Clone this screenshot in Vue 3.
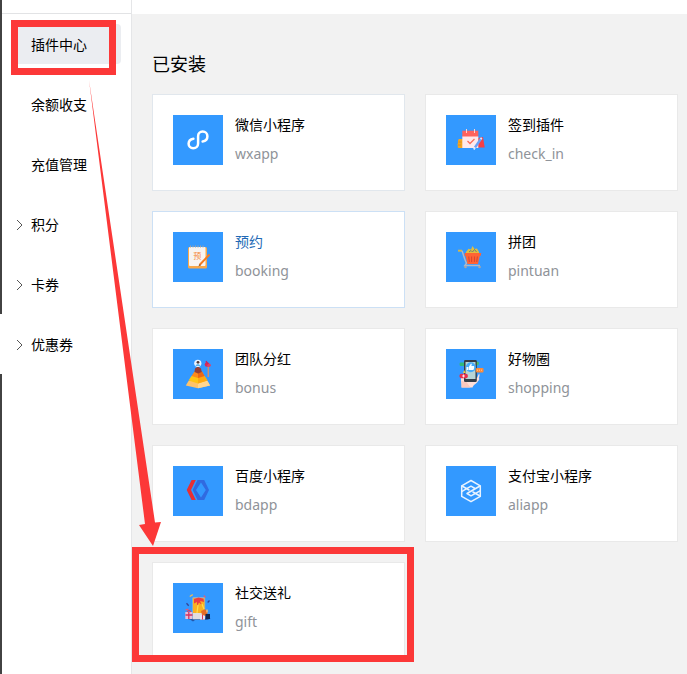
<script setup>
const menu = [
  { label: '插件中心', active: true },
  { label: '余额收支' },
  { label: '充值管理' },
  { label: '积分', group: true },
  { label: '卡券', group: true },
  { label: '优惠券', group: true },
]

const plugins = [
  { id: 'wxapp', name: '微信小程序', state: 'fading' },
  { id: 'check_in', name: '签到插件' },
  { id: 'booking', name: '预约', state: 'hovered' },
  { id: 'pintuan', name: '拼团' },
  { id: 'bonus', name: '团队分红' },
  { id: 'shopping', name: '好物圈' },
  { id: 'bdapp', name: '百度小程序' },
  { id: 'aliapp', name: '支付宝小程序' },
  { id: 'gift', name: '社交送礼' },
]
</script>

<template>
  <div class="page">
    <div class="rail"><span class="rail-current"></span></div>

    <aside class="sidebar">
      <div class="topline"></div>
      <nav class="menu">
        <a v-for="item in menu" :key="item.label" href="#" class="menu-item" :class="{ active: item.active }">
          <svg v-if="item.group" class="chevron" viewBox="0 0 8 12" aria-hidden="true">
            <path d="M1 1l5 5-5 5" />
          </svg>
          <span>{{ item.label }}</span>
        </a>
      </nav>
    </aside>

    <div class="content">
      <header class="topbar"></header>
      <main class="main">
        <h1 class="title">已安装</h1>
        <div class="grid">
          <a v-for="p in plugins" :key="p.id" href="#" class="card" :class="p.state">
            <svg class="icon" viewBox="0 0 50 50" aria-hidden="true">
              <rect width="50" height="50" fill="#39f" />

              <path
                v-if="p.id === 'wxapp'"
                d="M29.6 26.6C32.4 26.2 34.4 24 34.4 21.3C34.4 18.6 32.3 16.6 29.7 16.6C27 16.6 25.1 18.6 25.1 21.2V28.4C25.1 31 23.1 33.2 20.2 33.2C17.5 33.2 15.6 31.3 15.6 28.8C15.6 26.2 17.6 24.2 20.4 23.7"
                fill="none" stroke="#fff" stroke-width="2.5" stroke-linecap="round"
              />

              <g v-else-if="p.id === 'check_in'">
                <path d="M13 24h4v9h-4c-1.2 0-1.6-1-1-2-.7-1-.6-2 0-3-.3-2 .2-3.500 1-4z" fill="#f6a623" />
                <path d="M12.500 27h3M12 30h3" stroke="#c98a2c" stroke-width=".8" />
                <path d="M32 23l5-1 1.700 10.500H32z" fill="#f43f46" />
                <path d="M16.300 15.700h16V22h-16z" fill="#ff635e" />
                <path d="M16.300 21.500h16V33h-16z" fill="#ffe9ec" />
                <path d="M20.500 14v4M28.500 14v4" stroke="#ffd4d4" stroke-width="1" />
                <path d="M21.500 26l2.500 2.500 4.500-4.500" fill="none" stroke="#fb6c5a" stroke-width="1.300" />
                <path d="M35.300 23.300L29 32.500" stroke="#6aa0f7" stroke-width="2.400" />
                <path d="M35.700 22.700l-1 1.500M29 32.500l-1.200 2" stroke="#dbe9ff" stroke-width="1.800" />
              </g>

              <g v-else-if="p.id === 'booking'">
                <rect x="15" y="15" width="19" height="21.500" rx="1.500" fill="#f8a84a" />
                <rect x="16" y="15" width="16.500" height="19" rx="1" fill="#f7f4f2" />
                <path d="M17 14.500h15" stroke="#a9a39e" stroke-width="2" stroke-dasharray="1 1.500" />
                <text x="24.300" y="26.500" text-anchor="middle" class="icon-char">预</text>
                <path d="M36.500 22.500L26.500 33" stroke="#f47b20" stroke-width="1.900" />
                <path d="M26.800 32l-1.600 2.500 2.800-1.200z" fill="#8b5a35" />
              </g>

              <g v-else-if="p.id === 'pintuan'">
                <path d="M12 18.700h4" stroke="#d5b64a" stroke-width="2" />
                <path d="M16 18.700c1 2.500 2.500 9 4.500 12.500L18.800 33.500H34" fill="none" stroke="#aeb9ca" stroke-width="1.400" />
                <path d="M20 20l2.500-3.300 2.500.8 1.500-3.500 2 3 2.500-.4L33 20v2H20z" fill="#dfbe42" />
                <path d="M23 20l2-1.500 1.500 1.500 2-2.500 2 2.500" fill="none" stroke="#627e77" stroke-width=".9" />
                <path d="M18.700 21H35.300l-.7 3h-.8l-1.800 8H21.500l-2-8h-.8z" fill="#ff6334" />
                <path d="M22.700 24.500l.7 5.500M25.600 24.500v5.500M28.500 24.500v5.500M31.400 24.500l-.7 5.500" stroke="#d9472f" stroke-width="1.100" />
                <circle cx="19.500" cy="35" r="1.300" fill="#a9a6a7" />
                <circle cx="33.500" cy="35" r="1.300" fill="#a9a6a7" />
              </g>

              <g v-else-if="p.id === 'bonus'">
                <path d="M15.500 32h19L37 36.500 25 39.300 12.800 36.500z" fill="#ffc36b" />
                <path d="M25 32h9.500L37 36.500 25 39.300z" fill="#ffd690" />
                <path d="M18.500 27h13l3 4.500L25 34.500 15.500 31.500z" fill="#ffc414" />
                <path d="M25 27h6.500l3 4.500L25 34.500z" fill="#ffa80f" />
                <path d="M21.500 22.500h7.500l2.500 4.500L25 29l-6.500-2z" fill="#fd8b1b" />
                <path d="M25 22.500h4l2.500 4.500L25 29z" fill="#ec6814" />
                <path d="M22 19.500l3-2 3 2 .8 3.500-3.800 1.400L21.500 23z" fill="#963f34" />
                <circle cx="24.800" cy="14.300" r="3.600" fill="#eaf5ff" />
                <path d="M22.500 17c.2-2.500 4.600-2.500 4.800 0z" fill="#5ab1e5" />
                <circle cx="25" cy="13.300" r="1.400" fill="#513c3c" />
                <path d="M35.300 17.500V28" stroke="#c99170" stroke-width="1.500" />
                <circle cx="34" cy="15.500" r="2.300" fill="#d52b5a" />
                <circle cx="36" cy="16.300" r="1.800" fill="#e63f66" />
                <path d="M33 12.200l2 3" stroke="#c9265d" stroke-width="1.400" />
              </g>

              <g v-else-if="p.id === 'shopping'">
                <path d="M17 25l14 4 2-4.500c1 1 .5 3-.2 4.500 1 .5.200 2.500-.8 3-1 3-4 2.500-5.500 6.500L15.500 38.500C16 34 14 31 15.500 27z" fill="#ffdfd9" />
                <path d="M15.500 31.500c2 1 4 2 5 1.500l4 5.500h-9z" fill="#fbc8be" />
                <rect x="13.600" y="13.500" width="5.500" height="3.500" rx="1.200" fill="#2eb97c" />
                <path d="M29 13.500c2-2 4-.5 4 1s-2 2-4 1.800z" fill="#49bb6c" />
                <rect x="18" y="11" width="12.800" height="22" rx="1.300" fill="#353c45" />
                <path d="M19.500 13H29.500v17H19.500z" fill="#b8d5d5" />
                <circle cx="24.800" cy="18.300" r="5" fill="#45abfa" />
                <path d="M20.500 18h2v3h-2zM23 17.500l2-3 .8.500-.4 2H28c.5 1.500 0 3-.7 4H23z" fill="#f8fdff" />
                <rect x="30" y="19" width="7.500" height="4.500" rx="1" fill="#ff8a37" />
                <path d="M31 21.200h5.500" stroke="#ffe0b4" stroke-width=".8" stroke-dasharray="1 1" />
                <path d="M17 24l1.200-3 1.500 3z" fill="#f4c83a" />
                <rect x="13.500" y="24.700" width="8.300" height="4.600" rx="1.800" fill="#e72f4f" />
                <path d="M17.500 25.500v3M16 27h3" stroke="#fff" stroke-width=".8" />
              </g>

              <g v-else-if="p.id === 'bdapp'">
                <path d="M18.600 14h4.200L18 24l4.800 10h-4.200L13.700 24z" fill="#e92f35" />
                <path fill-rule="evenodd" d="M24.500 14h6.700L36 24l-4.800 10h-6.700L19.700 24zM28 16.500L23 24 28 31.500 32.800 24z" fill="#306ae0" />
              </g>

              <g v-else-if="p.id === 'aliapp'" fill="none" stroke="#e8f3ff" stroke-width="1.500" stroke-linejoin="round" stroke-linecap="round">
                <path d="M25 14.500l9.300 5.300v10.600L25 35.700l-9.300-5.300V19.800z" />
                <path d="M16 20l7 4M34 20l-13 7.500 4 2.300 9-5M16 25.400l9-5.200 4 2.300M27 26l7 4" />
              </g>

              <g v-else>
                <path d="M16.500 13l3-2 .5 1.300-3 1.600z" fill="#f5bd4c" />
                <path d="M13.500 20.300l2.200 2.500M36.500 17.500l-1.800 2" stroke="#354397" stroke-width="1.300" />
                <path d="M31 12.500l1.300 2M12.500 27l3-1" stroke="#fb5269" stroke-width="1.300" />
                <path d="M12 35.500h26L34 37H22l-2 1.500-3-2z" fill="#2456a8" />
                <rect x="19.200" y="14" width="13" height="22.500" rx="1.500" fill="#8fafca" />
                <rect x="20" y="15.300" width="11.500" height="15" fill="#fbb021" />
                <rect x="20" y="30" width="9" height="6" fill="#e1dddf" />
                <path d="M21 16l4.500-1.500 5 1.200.5 3.300-4-1 2 4-3-2.500-2 3.500v-4l-3 1.500z" fill="#ed3c43" />
                <path d="M25 22l-1 8M29 21l2 5" stroke="#ffdc47" stroke-width="1.300" />
                <rect x="12.300" y="29" width="7" height="7" fill="#e8bdd6" />
                <path d="M15.800 29v7M12.500 32h7" stroke="#d43161" stroke-width="1.300" />
                <path d="M14 28.700l2-1.400 2 1.400" fill="none" stroke="#ef3458" stroke-width="1.100" />
                <rect x="27" y="32" width="5" height="4.500" fill="#e9e3f3" />
                <path d="M29.500 32v4.500" stroke="#e03659" />
                <path d="M28 28l4-1.800 2.500 2.300-.5 5-5-1.800z" fill="#e46b27" />
                <rect x="32.500" y="31" width="4.500" height="5" fill="#102752" />
                <path d="M34 26.500v3" stroke="#efbe74" stroke-width="1.500" />
              </g>
            </svg>
            <span class="text">
              <span class="name">{{ p.name }}</span>
              <span class="code">{{ p.id }}</span>
            </span>
          </a>
        </div>
      </main>
    </div>

    <svg class="marks" width="420" height="670" aria-hidden="true">
      <rect x="14.500" y="23.500" width="98" height="48" />
      <rect x="135.500" y="550.500" width="275" height="108" />
      <path d="M89 80L155 522.500 161 522 153 546 139 525 145 524z" />
    </svg>
  </div>
</template>

<style>
body {
  margin: 0;
}
</style>

<style scoped>
.page {
  position: relative;
  display: flex;
  min-height: 100vh;
  background: #fff;
  color: #000;
  font-family: "Noto Sans", "Noto Sans CJK SC", sans-serif;
  font-size: 14px;
}

a {
  color: inherit;
  text-decoration: none;
}

.rail {
  flex: none;
  width: 2px;
  box-sizing: border-box;
  padding-top: 314px;
  background: #424242;
}

.rail-current {
  display: block;
  height: 60px;
  background: #fff;
}

.sidebar {
  flex: none;
  width: 129px;
  border-right: 1px solid #e5e6e8;
}

.topline {
  height: 13px;
  border-bottom: 1px solid #e2e3e5;
}

.menu {
  display: flex;
  flex-direction: column;
  gap: 20px;
  padding: 10px;
}

.menu-item {
  display: flex;
  align-items: center;
  position: relative;
  box-sizing: border-box;
  height: 40px;
  padding: 2px 0 0 19px;
  border-radius: 4px;
  line-height: 20px;
}

.menu-item.active {
  background: #ebedf1;
}

.chevron {
  position: absolute;
  left: 4px;
  width: 8px;
  height: 12px;
  fill: none;
  stroke: #555;
  stroke-width: 1;
}

.content {
  flex: 1;
  min-width: 0;
  display: flex;
  flex-direction: column;
}

.topbar {
  height: 14px;
  background: #fff;
}

.main {
  flex: 1;
  padding: 36px 9px 15px 20px;
  background: #f2f2f2;
}

.title {
  margin: 0 0 16px;
  font-size: 18px;
  font-weight: 400;
  line-height: 28px;
}

.grid {
  display: grid;
  grid-template-columns: 1fr 1fr;
  gap: 20px;
}

.card {
  display: flex;
  gap: 12px;
  box-sizing: border-box;
  height: 97px;
  padding: 20px;
  border: 1px solid #e9e9e9;
  background: #fff;
}

.card.fading {
  border-color: #e1e7ed;
}

.card.hovered {
  border-color: #cce0f5;
}

.icon {
  flex: none;
  width: 50px;
  height: 50px;
}

.icon-char {
  fill: #f58a3c;
  font-size: 8px;
}

.text {
  display: flex;
  flex-direction: column;
  gap: 9px;
}

.name,
.code {
  line-height: 20px;
}

.code {
  color: #8f9399;
}

.hovered .name {
  color: #2269b5;
}

.marks {
  position: absolute;
  top: 0;
  left: 0;
  pointer-events: none;
}

.marks rect {
  fill: none;
  stroke: #fc3838;
  stroke-width: 7;
}

.marks path {
  fill: #fc3838;
}
</style>
